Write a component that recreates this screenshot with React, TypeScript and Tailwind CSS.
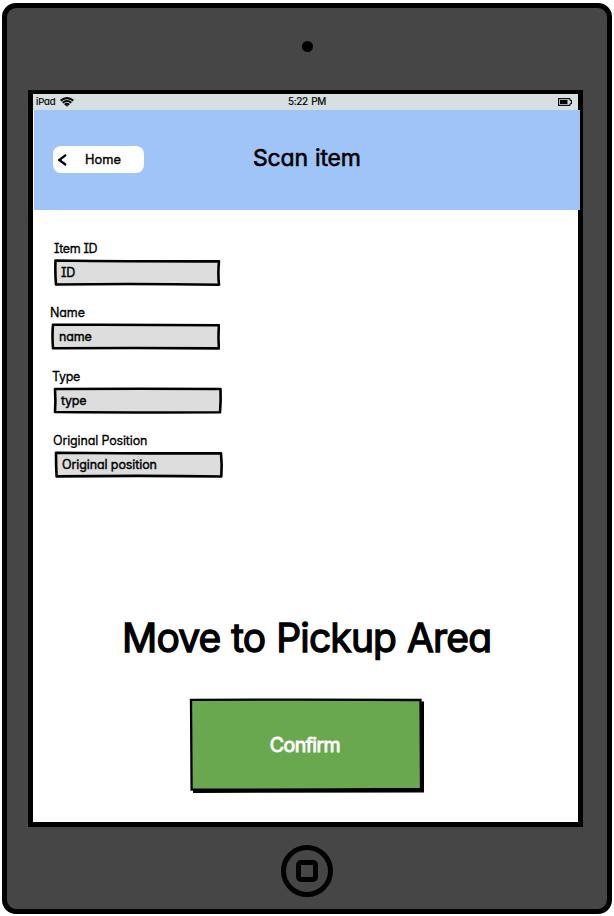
type FieldProps = {
  label: string;
  value: string;
  labelClass: string;
  boxClass: string;
  valueClass: string;
  outline: string;
  width: number;
};

const FEATURES = "[font-feature-settings:'cv11','cv08','ss03']";

function Field({ label, value, labelClass, boxClass, valueClass, outline, width }: FieldProps) {
  return (
    <div className="h-16">
      <div className={`h-[19px] text-[12.5px] leading-[19px] [-webkit-text-stroke:0.3px_#000] ${labelClass}`}>{label}</div>
      <div className={`relative mt-[1px] flex h-7 items-center ${boxClass}`}>
        <svg className="absolute inset-0" width={width} height="28" viewBox={`0 0 ${width} 28`}>
          <path d={outline} fill="#dddddd" stroke="#000" strokeWidth="2.6" strokeLinejoin="round" />
        </svg>
        <span className={`relative text-[12.5px] leading-4 [-webkit-text-stroke:0.4px_#000] ${valueClass}`}>{value}</span>
      </div>
    </div>
  );
}

function StatusBar() {
  return (
    <div className="flex h-4 items-center bg-[#d6dfe1] text-[10px] leading-4 [-webkit-text-stroke:0.2px_#000]">
      <span className="ml-[3px] w-[24px] text-[9.5px] tracking-[-0.1px]">iPad</span>
      <svg width="14" height="10" viewBox="0 0 14 10" fill="none" stroke="#000" strokeWidth="2">
        <path d="M.7 3.6Q7-1.4 13.3 3.6M2.7 5.7Q7 2.3 11.3 5.7M4.7 7.7Q7 6 9.3 7.7" />
        <path d="M5.5 8.2h3L7 9.8z" fill="#000" stroke="none" />
      </svg>
      <span className="-mt-[2px] ml-[214px] w-[60px] whitespace-nowrap tracking-[-0.35px] [word-spacing:1px]">5:22 PM</span>
      <svg className="ml-auto mr-[6px]" width="14" height="8" viewBox="0 0 14 8">
        <path d="M.6.6h11.2l.4 1.7 1.2.2v3l-1.2.2-.4 1.7H.6z" fill="#d6dfe1" stroke="#111" strokeWidth="1.2" />
        <path d="M2 2h7.5v4H2z" />
      </svg>
    </div>
  );
}

export default function App() {
  return (
    <div className={`h-[916px] w-[614px] overflow-hidden bg-white pl-[2px] pt-[3px] font-['Inter','Liberation_Sans',sans-serif] text-black ${FEATURES}`}>
      <div className="flex h-[911px] w-[610px] flex-col rounded-[14px] border-[5px] border-black bg-[#464646]">
        <div className="flex h-[82px] justify-center pt-[32.5px]">
          <div className="size-[11px] rounded-full bg-black" />
        </div>
        <div className="ml-[21px] h-[737px] w-[555px] border-5 border-t-[4px] border-black bg-white">
          <StatusBar />
          <header className="-mr-[2px] ml-[1px] flex h-[100px] w-[546px] bg-[#9fc5f8]">
            <button className="ml-[19px] mt-[36px] flex h-[27px] w-[91px] items-center rounded-[8px] bg-white">
              <svg className="ml-[5px]" width="9" height="12" viewBox="0 0 9 12" fill="none" stroke="#000" strokeWidth="2.3">
                <path d="M8 .9 1.2 6 8 11" />
              </svg>
              <span className="ml-[18px] text-[12.8px] leading-4 [-webkit-text-stroke:0.35px_#000]">Home</span>
            </button>
            <h1 className="ml-[109px] mt-[33px] whitespace-nowrap text-[23px] leading-[30px] tracking-[-0.2px] [word-spacing:1px] [-webkit-text-stroke:0.6px_#000] [stroke-linejoin:round]">Scan item</h1>
          </header>
          <main className="flex flex-col">
            <div className="h-[383px] pt-[29px]">
              <Field label="Item ID" value="ID" labelClass="ml-[21px] tracking-[-0.4px]" boxClass="ml-[21px]" valueClass="ml-[7px] tracking-[-0.3px]" width={168} outline="M1.5 1.5Q80 2.5 165 2.4Q163.8 14 165 25.7Q80 24.4 2 25.5Q1 14 1.5 1.5z" />
              <Field label="Name" value="name" labelClass="ml-[17px] tracking-[-0.1px]" boxClass="ml-[18px]" valueClass="ml-[8px] tracking-[-0.15px]" width={169} outline="M2 1.8Q90 1.5 168 2.3Q167 14 168 25.4Q90 24.6 2 25.3Q1 12 2 1.8z" />
              <Field label="Type" value="type" labelClass="ml-[19px] tracking-[-0.3px]" boxClass="ml-[20px]" valueClass="ml-[8px] tracking-[-0.25px]" width={170} outline="M2 2Q90 1.5 167.5 2Q168 14 167 25.3Q90 25.7 2 25Q2.8 14 2 2z" />
              <Field label="Original Position" value="Original position" labelClass="ml-[20px] tracking-[-0.15px]" boxClass="ml-[21px]" valueClass="ml-[8px] tracking-[-0.1px]" width={170} outline="M2 1.7Q90 2.6 167 2.3Q168.2 14 167.3 25.5Q90 24.4 2.6 25.4Q2 14 2 1.7z" />
            </div>
            <h2 className="ml-[89px] mt-[20px] h-[50px] whitespace-nowrap text-[39px] leading-[50px] tracking-[-0.85px] [word-spacing:0.8px] [-webkit-text-stroke:1.3px_#000] [stroke-linejoin:round]">Move to Pickup Area</h2>
            <button className="relative ml-[156px] mt-[35px] flex h-[96px] w-[236px] items-center justify-center">
              <svg className="absolute inset-0" width="236" height="96" viewBox="0 0 236 96">
                <path d="M5 5.5 235 3.5V94.5L4 95z" />
                <path d="M2 1.9Q120 1.2 231.5 2L232 91Q120 92 2.6 91.7z" fill="#6aa84f" stroke="#000" strokeWidth="2.3" />
              </svg>
              <span className="relative -left-[2px] -top-[1px] text-[19.5px] leading-6 tracking-[-0.55px] text-white [-webkit-text-stroke:0.9px_#fff]">Confirm</span>
            </button>
          </main>
        </div>
        <div className="flex justify-center pt-[18px]">
          <div className="flex size-[52px] items-center justify-center rounded-full border-5 border-black">
            <div className="size-[22px] rounded-[5px] border-5 border-black" />
          </div>
        </div>
      </div>
    </div>
  );
}
